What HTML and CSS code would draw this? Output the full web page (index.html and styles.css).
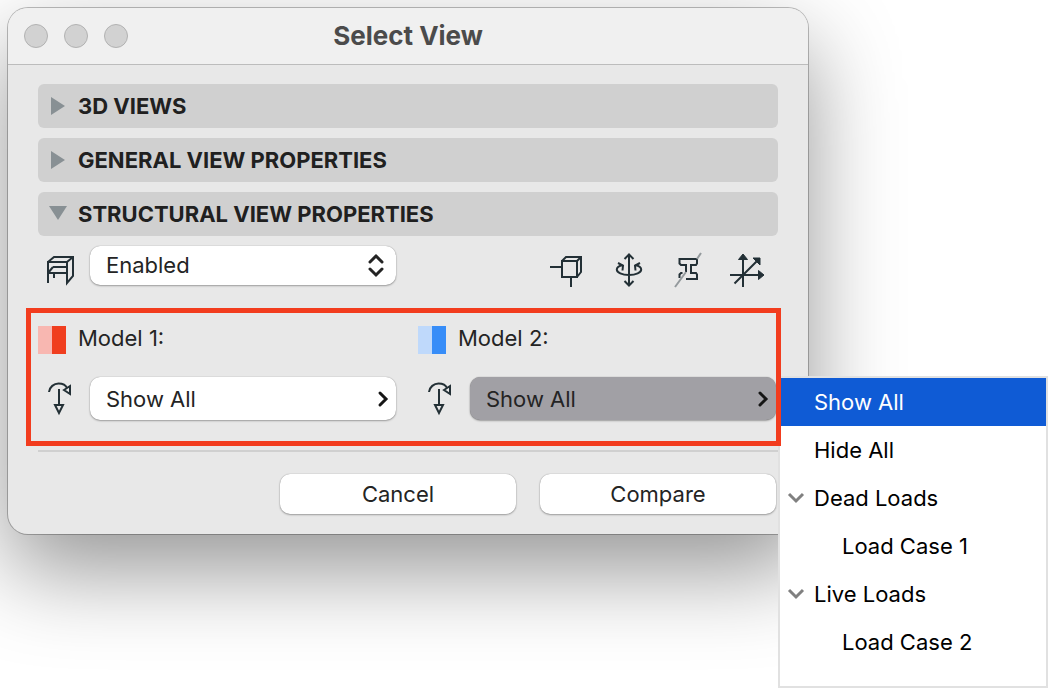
FILE: index.html
```html
<!DOCTYPE html>
<html lang="en">
<head>
    <meta charset="UTF-8">
    <meta name="viewport" content="width=device-width, initial-scale=1.0">
    <title>Select View</title>
    <link rel="stylesheet" href="styles.css">
</head>
<body>
    <div class="dialog" role="dialog" aria-labelledby="dialogTitle">
        <div class="titlebar">
            <div class="window-buttons">
                <button type="button" class="dot" aria-label="Close"></button>
                <button type="button" class="dot" aria-label="Minimize"></button>
                <button type="button" class="dot" aria-label="Zoom"></button>
            </div>
            <h1 id="dialogTitle">Select View</h1>
        </div>

        <div class="content">
            <div class="sections">
                <button type="button" class="section" aria-expanded="false">
                    <svg class="arrow" viewBox="0 0 16 20"><path d="M1 1V19L15 10Z"/></svg>
                    3D VIEWS
                </button>
                <button type="button" class="section" aria-expanded="false">
                    <svg class="arrow" viewBox="0 0 16 20"><path d="M1 1V19L15 10Z"/></svg>
                    GENERAL VIEW PROPERTIES
                </button>
                <button type="button" class="section" aria-expanded="true">
                    <svg class="arrow" viewBox="0 0 16 20"><path d="M-1 2H17L8 16Z"/></svg>
                    STRUCTURAL VIEW PROPERTIES
                </button>
            </div>

            <div class="toolbar">
                <label for="structure" aria-label="Structural view">
                    <svg class="icon field-icon" viewBox="0 0 44 36">
                        <path d="M10 31V10H29V31L35 24V5H16L10 10M29 10L35 5M15 15H29M10 21H29M10 21L15 15M16 21V26"/>
                    </svg>
                </label>
                <div class="select-wrap">
                    <select id="structure" class="field">
                        <option>Enabled</option>
                        <option>Disabled</option>
                    </select>
                    <svg class="updown" viewBox="0 0 16 24"><path d="M2 8L8 2L14 8M2 15L8 21L14 15"/></svg>
                </div>
                <div class="tools">
                    <button type="button" class="tool" aria-label="Supports">
                        <svg class="icon" viewBox="0 0 36 36">
                            <path d="M12 9H27V25H12ZM12 9L16 5H31V20L27 25M27 9L31 5M0 15H12M21 25V35"/>
                        </svg>
                    </button>
                    <button type="button" class="tool" aria-label="Releases">
                        <svg class="icon" viewBox="0 0 36 36">
                            <path d="M19 3V33M14.500 7L19 2.500L23.500 7M14.500 29L19 33.500L23.500 29M12.500 13C9 14 6.800 15.500 6.800 17.500C6.800 20.500 12 23 19 23S31.200 20.500 31.200 17.500C31.200 15.500 29 14 25.500 13M8 11L13 13.500L12.500 18.500M30 11L25 13.500L25.500 18.500"/>
                        </svg>
                    </button>
                    <button type="button" class="tool" aria-label="Cross section">
                        <svg class="icon" viewBox="0 0 36 36">
                            <path d="M16 20V13H11L9.500 11.500V7H27V11.500L26 13H21V21H26L27 22.500V27H16M9.500 26V22.500L11 21H12.500"/>
                            <path class="slash" d="M5 35L16 20M27 7L31 1"/>
                        </svg>
                    </button>
                    <button type="button" class="tool" aria-label="Local axes">
                        <svg class="icon" viewBox="0 0 36 36">
                            <path d="M0 23H29M13 35V6M4.500 31.500L27 9"/>
                            <path class="solid" d="M13 2L17.500 7.500H8.500ZM34 23L28.500 27.500V18.500ZM30 6V13L23 6Z"/>
                        </svg>
                    </button>
                </div>
            </div>

            <div class="models">
                <div class="model">
                    <div class="model-name">
                        <span class="swatch red"></span>
                        <label for="model1">Model 1:</label>
                    </div>
                    <div class="model-field">
                        <svg class="icon field-icon" viewBox="0 0 44 36">
                            <path d="M11 11C11.500 6 16 2.500 20.500 2.500C25 2.500 28 4.500 29 7M26 9L32 5V13ZM21 8V24M17 24H25L21 32Z"/>
                        </svg>
                        <button type="button" id="model1" class="field" aria-haspopup="true">
                            Show All
                            <svg class="chevron" viewBox="0 0 10 16"><path d="M2 2L8 8L2 14"/></svg>
                        </button>
                    </div>
                </div>
                <div class="model">
                    <div class="model-name">
                        <span class="swatch blue"></span>
                        <label for="model2">Model 2:</label>
                    </div>
                    <div class="model-field">
                        <svg class="icon field-icon" viewBox="0 0 44 36">
                            <path d="M11 11C11.500 6 16 2.500 20.500 2.500C25 2.500 28 4.500 29 7M26 9L32 5V13ZM21 8V24M17 24H25L21 32Z"/>
                        </svg>
                        <button type="button" id="model2" class="field open" aria-haspopup="true" aria-expanded="true">
                            Show All
                            <svg class="chevron" viewBox="0 0 10 16"><path d="M2 2L8 8L2 14"/></svg>
                        </button>
                        <div class="menu" role="menu">
                            <button type="button" class="item selected" role="menuitem">Show All</button>
                            <button type="button" class="item" role="menuitem">Hide All</button>
                            <button type="button" class="item group" role="menuitem" aria-expanded="true">
                                <svg class="caret" viewBox="0 0 16 12"><path d="M1 2L8 9L15 2"/></svg>
                                Dead Loads
                            </button>
                            <button type="button" class="item child" role="menuitem">Load Case 1</button>
                            <button type="button" class="item group" role="menuitem" aria-expanded="true">
                                <svg class="caret" viewBox="0 0 16 12"><path d="M1 2L8 9L15 2"/></svg>
                                Live Loads
                            </button>
                            <button type="button" class="item child" role="menuitem">Load Case 2</button>
                        </div>
                    </div>
                </div>
            </div>

            <div class="footer">
                <button type="button" class="action">Cancel</button>
                <button type="button" class="action">Compare</button>
            </div>
        </div>
    </div>
</body>
</html>
```
FILE: styles.css
```css
* {
    box-sizing: border-box;
}

body {
    min-height: 100vh;
    margin: 0;
    padding: 8px 252px 8px 8px;
    background-color: #ffffff;
    font-family: Inter, "Liberation Sans", sans-serif;
    font-size: 22px;
    line-height: 28px;
    color: #242424;
}

button, select {
    font: inherit;
    color: inherit;
    border: none;
    padding: 0;
    margin: 0;
    background: none;
}

svg {
    display: block;
    flex: none;
    fill: none;
    overflow: visible;
}

.dialog {
    background-color: #e8e8e8;
    border-radius: 20px;
    box-shadow: 0 0 0 1px rgba(0, 0, 0, 0.25), 0 36px 90px rgba(0, 0, 0, 0.42);
}

/* Title bar */
.titlebar {
    display: grid;
    grid-template-columns: 1fr auto 1fr;
    align-items: center;
    height: 57px;
    padding: 0 16px;
    background-color: #f0f0f0;
    border-bottom: 1px solid #bcbcbc;
    border-radius: 20px 20px 0 0;
}

.window-buttons {
    display: flex;
    gap: 16px;
}

.dot {
    width: 24px;
    height: 24px;
    border: 1px solid #b2b2b2;
    border-radius: 50%;
    background-color: #d2d2d2;
}

h1 {
    margin: 0;
    font-size: 26px;
    line-height: 28px;
    font-weight: 700;
    color: #4b4b4b;
}

.content {
    padding: 19px 30px 20px;
}

/* Collapsible sections */
.sections {
    display: flex;
    flex-direction: column;
    gap: 10px;
}

.section {
    display: flex;
    align-items: center;
    gap: 12px;
    height: 44px;
    padding: 0 12px;
    border-radius: 6px;
    background-color: #d0d0d0;
    color: #202020;
    font-weight: 700;
}

.arrow {
    width: 16px;
    height: 20px;
    fill: #889094;
}

/* Icons */
.icon {
    width: 36px;
    height: 36px;
    stroke: #233036;
    stroke-width: 2;
}

.field-icon {
    width: 44px;
}

.slash {
    stroke: #949a9d;
}

.solid {
    fill: #233036;
    stroke-width: 1;
}

.toolbar {
    display: flex;
    align-items: flex-end;
    height: 42px;
    margin-top: 10px;
}

.select-wrap {
    position: relative;
    align-self: flex-start;
    flex: 0 1 306px;
    margin-left: 8px;
}

.field {
    display: flex;
    align-items: center;
    justify-content: space-between;
    width: 100%;
    height: 43px;
    padding: 0 8px 0 16px;
    border-radius: 10px;
    background-color: #ffffff;
    box-shadow: 0 0 1px rgba(0, 0, 0, 0.4), 0 1px 2px rgba(0, 0, 0, 0.3);
}

select.field {
    appearance: none;
    height: 39px;
    padding-bottom: 2px;
}

.updown {
    position: absolute;
    right: 12px;
    top: 8px;
    width: 16px;
    height: 24px;
    stroke: #242424;
    stroke-width: 3;
    stroke-linecap: round;
    pointer-events: none;
}

.tools {
    display: flex;
    gap: 24px;
    margin-left: auto;
    padding-right: 12px;
}

/* Model pickers */
.models {
    position: relative;
    display: grid;
    grid-template-columns: 1fr 1fr;
    gap: 22px;
    margin: 20px -3px 0 -12px;
    padding: 18px 5px 26px 12px;
}

/* Frame sits above the open menu */
.models::after {
    content: "";
    position: absolute;
    inset: 0;
    z-index: 2;
    border: 5px solid #f23c1e;
    pointer-events: none;
}

.model-name {
    display: flex;
    align-items: flex-start;
    gap: 12px;
    margin-bottom: 23px;
    line-height: 24px;
}

.swatch {
    width: 28px;
    height: 28px;
}

.red {
    background: linear-gradient(90deg, #f8b7b1 50%, #f03e1f 50%);
}

.blue {
    background: linear-gradient(90deg, #bfd9fb 50%, #378df8 50%);
}

.model-field {
    position: relative;
    display: flex;
    align-items: center;
    gap: 8px;
}

.open {
    background-color: #a1a0a5;
}

.chevron {
    width: 10px;
    height: 16px;
    stroke: #151515;
    stroke-width: 3;
    stroke-linecap: round;
}

/* Drop-down menu */
.menu {
    position: absolute;
    left: calc(100% + 2px);
    top: -1px;
    z-index: 1;
    display: flex;
    flex-direction: column;
    width: 270px;
    padding-bottom: 20px;
    border: 2px solid #e1e1e1;
    background-color: #ffffff;
    color: #000000;
}

.item {
    display: flex;
    align-items: center;
    height: 48px;
    padding-left: 34px;
    text-align: left;
}

.selected {
    background-color: #0f5bd5;
    color: #ffffff;
}

.group {
    gap: 10px;
    padding-left: 8px;
}

.child {
    padding-left: 62px;
}

.caret {
    width: 16px;
    height: 12px;
    stroke: #808080;
    stroke-width: 3;
}

.footer {
    display: flex;
    justify-content: flex-end;
    gap: 24px;
    margin-top: 4px;
    padding: 22px 2px 0 0;
    border-top: 2px solid #d0d0d0;
}

.action {
    width: 236px;
    height: 40px;
    border-radius: 10px;
    background-color: #ffffff;
    box-shadow: 0 0 1px rgba(0, 0, 0, 0.4), 0 1px 2px rgba(0, 0, 0, 0.3);
}
```
